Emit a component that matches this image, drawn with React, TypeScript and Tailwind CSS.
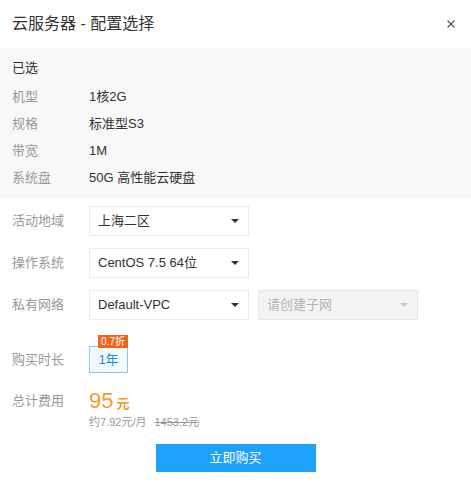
import { X } from 'lucide-react'

const font = { fontFamily: '"Liberation Sans", "Noto Sans CJK SC", sans-serif' }

const selected = [
  { label: '机型', value: '1核2G' },
  { label: '规格', value: '标准型S3' },
  { label: '带宽', value: '1M' },
  { label: '系统盘', value: '50G 高性能云硬盘' },
]

function Caret({ light }: { light?: boolean }) {
  return (
    <span
      className={`h-0 w-0 border-x-[4px] border-t-[4px] border-x-transparent ${light ? 'border-t-[#c8c8c8]' : 'border-t-[#333]'}`}
    />
  )
}

function Select({ value, disabled }: { value: string; disabled?: boolean }) {
  return (
    <div
      className={`flex h-[30px] w-[160px] items-center justify-between border pl-[8px] pr-[9px] text-[13px] ${
        disabled ? 'border-[#e6e6ea] bg-[#f3f3f5] text-[#b5b5b5]' : 'border-[#ebebeb] bg-white text-[#333]'
      }`}
    >
      <span>{value}</span>
      <Caret light={disabled} />
    </div>
  )
}

function Row({ label, children, className = '' }: { label: string; children: React.ReactNode; className?: string }) {
  return (
    <div className={`flex items-center ${className}`}>
      <span className="w-[77px] shrink-0 text-[13px] leading-[20px] text-[#999]">{label}</span>
      {children}
    </div>
  )
}

export default function App() {
  return (
    <div className="h-[488px] w-[471px] overflow-hidden bg-white" style={font}>
      <div className="flex h-[48px] items-center justify-between pl-[12px] pr-[14px]">
        <span className="text-[16px] text-[#333]">云服务器 - 配置选择</span>
        <X size={12} strokeWidth={2.5} className="text-[#555]" />
      </div>

      {/* 已选配置 */}
      <div className="bg-[#f8f8f9] px-[12px] pb-[10px] pt-[10px]">
        <div className="mb-[9px] text-[13px] leading-[20px] text-[#333]">已选</div>
        <div className="flex flex-col gap-[7px]">
          {selected.map((s) => (
            <Row key={s.label} label={s.label}>
              <span className="text-[13px] leading-[20px] text-[#333]">{s.value}</span>
            </Row>
          ))}
        </div>
      </div>

      <div className="flex flex-col gap-[12px] px-[12px] pt-[8px]">
        <Row label="活动地域">
          <Select value="上海二区" />
        </Row>
        <Row label="操作系统">
          <Select value="CentOS 7.5 64位" />
        </Row>
        <Row label="私有网络">
          <div className="flex gap-[9px]">
            <Select value="Default-VPC" />
            <Select value="请创建子网" disabled />
          </div>
        </Row>
      </div>

      <div className="px-[12px] pt-[26px]">
        <Row label="购买时长">
          <div className="relative flex h-[27px] w-[39px] items-center justify-center border border-[#8cc8e6] bg-[#f2faff] text-[13px] text-[#1a8bd6]">
            1年
            <span className="absolute right-[-1px] top-[-12px] bg-[#f0641e] px-[3px] text-[10px] leading-[13px] text-white">
              0.7折
            </span>
          </div>
        </Row>

        <Row label="总计费用" className="mt-[15px]">
          <span className="flex items-baseline text-[#f39a2a]">
            <span className="text-[22px] leading-[26px]">95</span>
            <span className="ml-[3px] text-[13px] font-bold">元</span>
          </span>
        </Row>
        <div className="ml-[77px] flex gap-[8px] text-[11px] leading-[16px] text-[#999]">
          <span>约7.92元/月</span>
          <span className="line-through">1453.2元</span>
        </div>

        <div className="mt-[14px] flex justify-center">
          <button className="h-[28px] w-[160px] bg-[#1ea1fa] text-[13px] text-white">立即购买</button>
        </div>
      </div>
    </div>
  )
}
